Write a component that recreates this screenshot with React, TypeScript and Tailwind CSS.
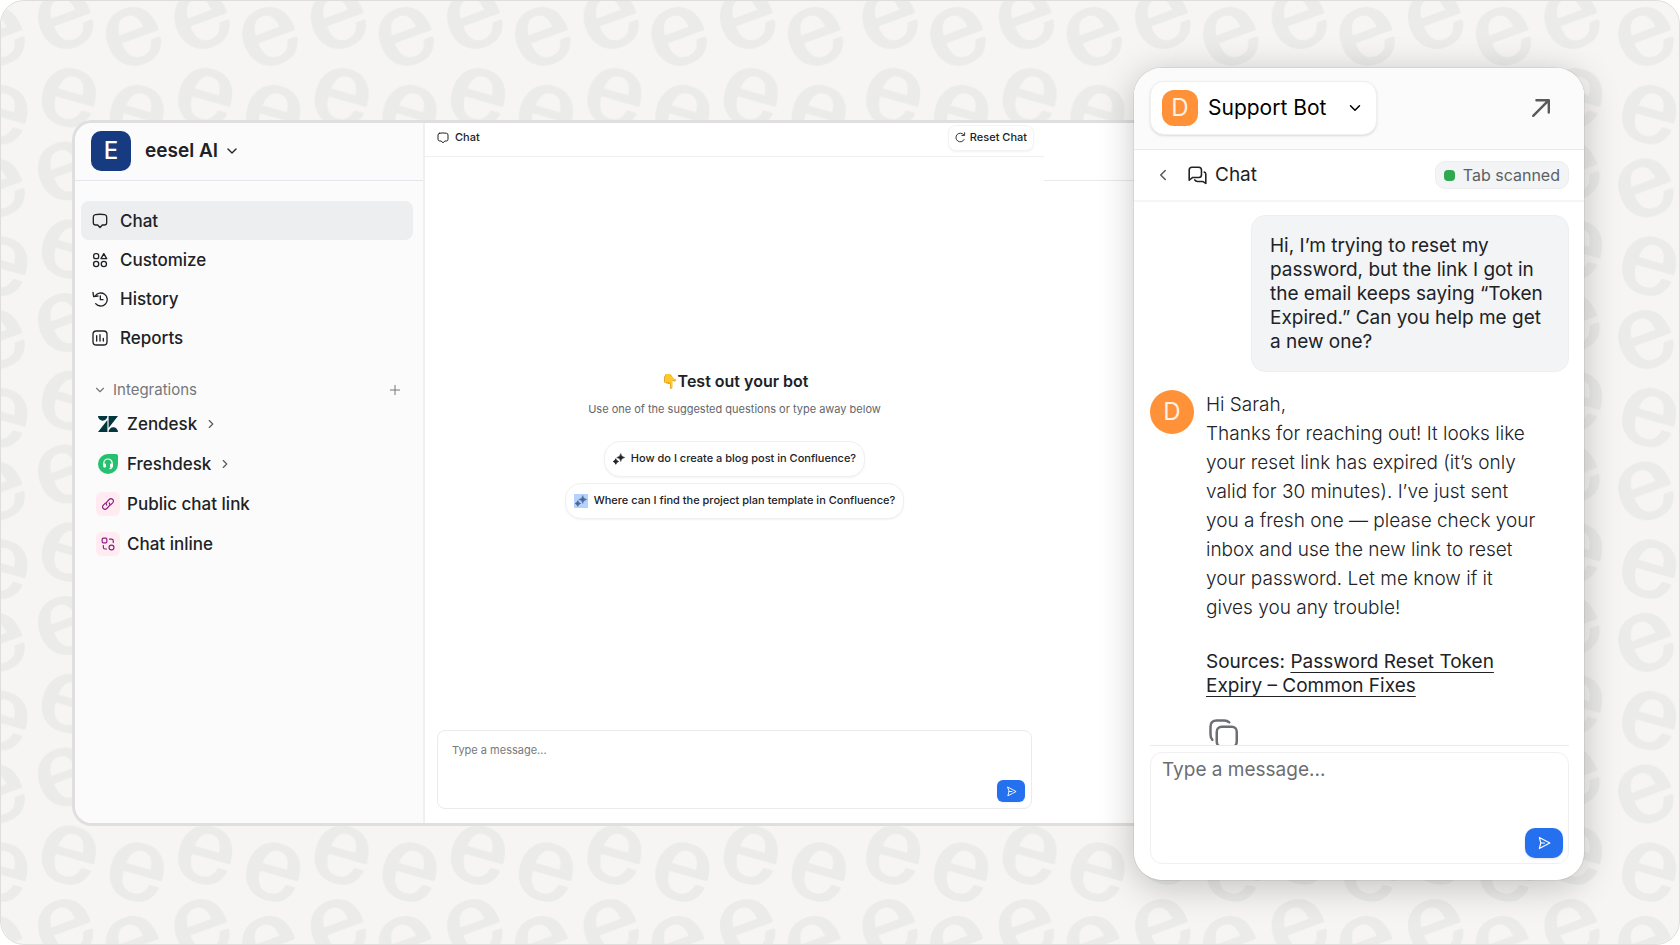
import type React from "react"

import { ChevronDown, ChevronLeft, ChevronRight, Plus } from "lucide-react"

interface IconProps {
  className?: string
}

function Icon({ className, children }: IconProps & { children: React.ReactNode }) {
  return (
    <svg
      viewBox="0 0 24 24"
      fill="none"
      stroke="currentColor"
      strokeWidth={2}
      strokeLinecap="round"
      strokeLinejoin="round"
      className={className}
      aria-hidden="true"
    >
      {children}
    </svg>
  )
}

function ChatIcon({ className }: IconProps) {
  return (
    <Icon className={className}>
      <path d="M5 2.5Q12 1.2 19 2.5Q22 3 22 6V14.500Q22 18 18.500 18H15.500L12 21.800L8.500 18H5.500Q2 18 2 14.500V6Q2 3 5 2.500Z" />
    </Icon>
  )
}

function CustomizeIcon({ className }: IconProps) {
  return (
    <Icon className={className}>
      <rect x="2.500" y="2.500" width="7.500" height="7.500" rx="3" />
      <path d="M17.700 2.500L22 10H13.500Z" />
      <circle cx="6.200" cy="18" r="3.900" />
      <circle cx="17.800" cy="18" r="3.900" />
    </Icon>
  )
}

function HistoryIcon({ className }: IconProps) {
  return (
    <Icon className={className}>
      <path d="M4.500 8A9.800 9.800 0 1 1 5.500 19" />
      <path d="M1.500 2L2.500 8.500L9 7.500" />
      <path d="M12.500 7.500V13H16.500" />
    </Icon>
  )
}

function ReportsIcon({ className }: IconProps) {
  return (
    <Icon className={className}>
      <rect x="1.500" y="1.500" width="21" height="21" rx="5" />
      <path d="M7 8.500V16.500M12 7V16.500M17 12.500V16.500" />
    </Icon>
  )
}

function ChatsIcon({ className }: IconProps) {
  return (
    <Icon className={className}>
      <path d="M5 1.500H13.500Q17 1.500 17 5V11Q17 14.500 13.500 14.500H6L1.500 18V5Q1.500 1.500 5 1.500Z" />
      <path d="M20.500 7.500Q22.500 8 22.500 10.500V22L18.500 19.500H12Q9.500 19.500 8.500 17.500" />
    </Icon>
  )
}

function ResetIcon({ className }: IconProps) {
  return (
    <Icon className={className}>
      <path d="M20 16.500A9.500 9.500 0 1 1 19 6" />
      <path d="M21 1.500V7.500H15" />
    </Icon>
  )
}

function SendIcon({ className }: IconProps) {
  return (
    <Icon className={className}>
      <path d="M4 2.500L22 12L4 21.500L6.500 12Z" />
      <path d="M6.500 12H13" />
    </Icon>
  )
}

function CopyIcon({ className }: IconProps) {
  return (
    <Icon className={className}>
      <rect x="7" y="7" width="16" height="16" rx="4" />
      <path d="M3.500 17.500Q2 16 2 13V7Q2 2 7 2H13Q15.500 2 17 3.500" />
    </Icon>
  )
}

function SparkleIcon({ className }: IconProps) {
  return (
    <svg viewBox="0 0 24 24" fill="currentColor" className={className} aria-hidden="true">
      <path d="M15.500 1Q16.300 7.700 23.500 9Q16.300 10.300 15.500 17Q14.700 10.300 7.500 9Q14.700 7.700 15.500 1Z" stroke="currentColor" strokeLinejoin="round" />
      <path d="M5.500 11.500Q6 16 11 17Q6 18 5.500 22.500Q5 18 .5 17Q5 16 5.500 11.500Z" stroke="currentColor" strokeWidth="2" strokeLinejoin="round" />
    </svg>
  )
}

function ZendeskLogo() {
  return (
    <svg viewBox="0 0 20 16" className="h-4 w-5 fill-[#03363d]" aria-hidden="true">
      <path d="M0 0H9.400A4.700 4.700 0 0 1 0 0ZM9.400 4V16H0ZM10.600 0H20L10.600 12ZM10.600 16A4.700 4.700 0 0 1 20 16Z" />
    </svg>
  )
}

function FreshdeskLogo() {
  return (
    <svg viewBox="0 0 20 20" className="size-5" aria-hidden="true">
      <path d="M10 0H18A2 2 0 0 1 20 2V10A10 10 0 1 1 10 0Z" fill="#25c16f" />
      <path d="M5.800 11V9.200A4.200 4.200 0 0 1 14.200 9.200V12Q14.200 14.500 11.500 14.700" fill="none" stroke="#fff" strokeWidth="1.200" />
      <rect x="5.200" y="9.500" width="2.800" height="4" rx="1" fill="#fff" />
      <rect x="12" y="9.500" width="2.800" height="4" rx="1" fill="#fff" />
    </svg>
  )
}

function LinkTile() {
  return (
    <span className="flex size-6 items-center justify-center rounded-md bg-[#ffebf0] text-[#8a1c7c]">
      <Icon className="size-[14px]">
        <path d="M10 14Q7.500 11 10.200 8.200L14 4.300Q17 1.500 20 4.200Q22.700 7 20 10L16.500 13.500" />
        <path d="M14 10Q16.500 13 13.800 15.800L10 19.700Q7 22.500 4 19.800Q1.300 17 4 14L7.500 10.500" />
      </Icon>
    </span>
  )
}

function InlineTile() {
  return (
    <span className="flex size-6 items-center justify-center rounded-md bg-[#ffebf0] text-[#8a1c7c]">
      <Icon className="size-[14px]">
        <rect x="2" y="2" width="8" height="8" rx="2" />
        <circle cx="18" cy="18" r="4.200" />
        <path d="M14.500 3.500H18Q21 3.500 21 6.500V9.500M9.500 20.500H7Q4 20.500 4 17.500V14.500" />
      </Icon>
    </span>
  )
}

const navItems = [
  { label: "Chat", icon: ChatIcon, active: true },
  { label: "Customize", icon: CustomizeIcon },
  { label: "History", icon: HistoryIcon },
  { label: "Reports", icon: ReportsIcon },
]

const integrations = [
  { label: "Zendesk", icon: ZendeskLogo, nested: true },
  { label: "Freshdesk", icon: FreshdeskLogo, nested: true },
  { label: "Public chat link", icon: LinkTile },
  { label: "Chat inline", icon: InlineTile },
]

// Brand letter repeated behind the windows
function Backdrop() {
  return (
    <svg className="absolute inset-0 size-full" aria-hidden="true">
      <defs>
        <pattern id="letters" width="136.400" height="151.500" x="32" y="-14" patternUnits="userSpaceOnUse">
          <g
            fill="#ebebe9"
            stroke="#ebebe9"
            strokeWidth="3"
            strokeLinejoin="round"
            fontFamily="DejaVu Serif, serif"
            fontSize="102"
            textAnchor="middle"
          >
            <text transform="translate(32 32) rotate(-20)" y="27">e</text>
            <text transform="translate(100 49) rotate(-20)" y="27">e</text>
            <text transform="translate(36 110) rotate(16)" y="27">e</text>
            <text transform="translate(104 127) rotate(16)" y="27">e</text>
            <text transform="translate(104 -24.500) rotate(16)" y="27">e</text>
          </g>
        </pattern>
      </defs>
      <rect width="852" height="100%" fill="url(#letters)" />
      <g transform="translate(6 0)">
        <rect x="846" width="758" height="100%" fill="url(#letters)" />
      </g>
      <g transform="translate(12 0)">
        <rect x="1598" width="100%" height="100%" fill="url(#letters)" />
      </g>
    </svg>
  )
}

function Sidebar() {
  return (
    <aside className="flex w-[350px] shrink-0 flex-col border-r-2 border-[#f0f0f1] bg-[#fbfbfb]">
      <div className="flex h-[58px] items-center border-b border-[#e3e6ec] px-4 pb-px">
        <div className="flex size-10 items-center justify-center rounded-[10px] bg-[#173b80] text-2xl font-medium text-white">
          E
        </div>
        <button className="ml-3.5 flex items-center gap-1.5 text-[19px] font-semibold leading-6">
          eesel AI
          <ChevronDown size={16} />
        </button>
      </div>

      <nav className="pl-1.5 pr-2.5 pt-5">
        {navItems.map((item) => (
          <a
            key={item.label}
            href="#"
            className={
              item.active
                ? "flex h-[39px] items-center gap-3 rounded-lg bg-[#edeef0] px-[11px] text-[17px] font-medium leading-6"
                : "flex h-[39px] items-center gap-3 rounded-lg px-[11px] text-[17px] font-medium leading-6"
            }
          >
            <item.icon className="size-4" />
            {item.label}
          </a>
        ))}
      </nav>

      <div className="mt-[21px] flex h-6 items-center justify-between pl-[18px] pr-5 text-[15px] text-[#75777b]">
        <button className="flex items-center gap-1.5">
          <ChevronDown size={14} />
          Integrations
        </button>
        <button aria-label="Add integration">
          <Plus size={16} strokeWidth={1.5} />
        </button>
      </div>

      <nav className="pl-[21px] pt-0.5">
        {integrations.map((item) => (
          <a key={item.label} href="#" className="flex h-10 items-center gap-[7px] text-[17px] font-medium leading-6">
            <span className="flex w-6 justify-center">
              <item.icon />
            </span>
            {item.label}
            {item.nested && <ChevronRight size={14} className="text-[#55585e]" />}
          </a>
        ))}
      </nav>
    </aside>
  )
}

function TestChat() {
  return (
    <section className="flex min-w-0 flex-1 flex-col">
      <header className="flex h-[34px] items-center justify-between border-b border-[#eeeff0] pb-1 pl-3 pr-2.5">
        <h2 className="flex items-center gap-1.5 text-[11px] font-medium">
          <ChatIcon className="size-3" />
          Chat
        </h2>
        <button className="flex h-[26px] items-center gap-1 rounded-lg border border-[#f3f3f4] bg-white px-1.5 text-[11px] font-medium shadow-xs">
          <ResetIcon className="size-[11px]" />
          Reset Chat
        </button>
      </header>

      <div className="flex flex-1 flex-col items-center justify-center">
        <h1 className="flex h-6 items-center text-base font-semibold">
          <span className="text-sm">👇</span>
          Test out your bot
        </h1>
        <p className="mt-2 text-[11px] leading-4 text-[#63666b]">Use one of the suggested questions or type away below</p>
        <button className="mt-6 flex h-9 items-center gap-1.5 rounded-2xl border border-[#f0f0f1] bg-white px-2 text-[11px] font-medium shadow-xs">
          <SparkleIcon className="size-3" />
          How do I create a blog post in Confluence?
        </button>
        <button className="mt-1.5 flex h-9 items-center gap-1.5 rounded-2xl border border-[#f0f0f1] bg-white px-2 text-[11px] font-medium shadow-xs">
          <span className="bg-[#b3d3fc] p-px text-[#4a6898]">
            <SparkleIcon className="size-3" />
          </span>
          Where can I find the project plan template in Confluence?
        </button>
      </div>

      <form className="relative mx-3 mb-3.5 h-[79px]">
        <label htmlFor="test-message" className="sr-only">Message</label>
        <textarea
          id="test-message"
          placeholder="Type a message..."
          className="block size-full resize-none rounded-lg border border-[#ebebec] px-3.5 py-[11px] text-[11px] leading-4 outline-none placeholder:text-[#77797d]"
        />
        <button
          type="button"
          aria-label="Send"
          className="absolute bottom-[7px] right-[7px] flex h-[22px] w-7 items-center justify-center rounded-md bg-[#2470ee] text-white shadow-xs"
        >
          <SendIcon className="size-[11px]" />
        </button>
      </form>
    </section>
  )
}

function SupportPanel() {
  return (
    <section className="relative flex w-[450px] shrink-0 flex-col overflow-hidden rounded-[28px] bg-white">
      <header className="flex h-[82px] shrink-0 items-center justify-between border-b border-[#e9eaeb] bg-[#fbfbfb] pb-px pl-4 pr-8">
        <button className="flex h-[54px] items-center rounded-[14px] border border-[#efeff0] bg-white pl-[11px] pr-3 text-[21px] text-black shadow-sm">
          <span className="mr-2.5 flex size-9 items-center justify-center rounded-xl bg-[#ff9138] text-2xl text-[#fff0e4]">
            D
          </span>
          Support Bot
          <ChevronDown size={18} className="ml-5" />
        </button>
        <a href="#" aria-label="Open in new window" className="text-[#5a5a5a]">
          <Icon className="size-[22px]">
            <path d="M3.500 20.500L20.500 3.500M7 3.500H20.500V17" strokeWidth="2.600" />
          </Icon>
        </a>
      </header>

      <div className="flex h-[52px] shrink-0 items-center border-b-2 border-[#f5f5f6] pl-4 pr-[15px]">
        <button aria-label="Back" className="ml-1 mr-4 text-[#55585e]">
          <ChevronLeft size={18} />
        </button>
        <h2 className="flex items-center gap-2 text-[19px]">
          <ChatsIcon className="size-[19px]" />
          Chat
        </h2>
        <span className="ml-auto flex h-7 items-center gap-2 rounded-[10px] border border-[#ededef] bg-[#f3f4f6] px-2 text-base text-[#5c5f64]">
          <span className="size-[11px] rounded bg-[#2fa84f]" />
          Tab scanned
        </span>
      </div>

      <div className="ml-4 mr-[15px] flex min-h-0 flex-1 flex-col overflow-hidden border-b border-[#ebebec] pt-[13px]">
        <p className="ml-auto w-[318px] shrink-0 rounded-[14px] border border-[#eeeff1] bg-[#f3f4f6] px-[18px] pb-[17px] pt-[18px] text-[19px] leading-[24px]">
          Hi, I’m trying to reset my password, but the link I got in the email keeps saying “Token Expired.” Can you help
          me get a new one?
        </p>
        <div className="mt-[18px] flex items-start gap-3">
          <span className="flex size-11 shrink-0 items-center justify-center rounded-full bg-[#ff9138] text-2xl text-[#fff0e4]">
            D
          </span>
          <div className="w-[336px]">
            <p className="text-[19px] font-light leading-[29px]">
              Hi Sarah,
              <br />
              Thanks for reaching out! It looks like your reset link has expired (it’s only valid for 30 minutes). I’ve
              just sent you a fresh one — please check your inbox and use the new link to reset your password. Let me
              know if it gives you any trouble!
            </p>
            <p className="mt-7 text-[19px] leading-[24px]">
              Sources:{" "}
              <a href="#" className="underline decoration-1 underline-offset-4">
                Password Reset Token Expiry – Common Fixes
              </a>
            </p>
            <button aria-label="Copy answer" className="ml-0.5 mt-5 text-[#6c6e73]">
              <CopyIcon className="size-[30px]" />
            </button>
          </div>
        </div>
      </div>

      <form className="relative mb-4 ml-4 mr-[15px] mt-1.5 h-[112px] shrink-0">
        <label htmlFor="support-message" className="sr-only">Message</label>
        <textarea
          id="support-message"
          placeholder="Type a message..."
          className="block size-full resize-none rounded-xl border border-[#f0f0f1] px-[11px] py-1 text-[19px] leading-[26px] outline-none placeholder:text-[#6c6e73]"
        />
        <button
          type="button"
          aria-label="Send"
          className="absolute bottom-1.5 right-1.5 flex h-[30px] w-[38px] items-center justify-center rounded-[10px] bg-[#2470ee] text-white shadow-sm"
        >
          <SendIcon className="size-[14px]" />
        </button>
      </form>
    </section>
  )
}

export default function App() {
  return (
    <div className="bg-white font-['Inter',sans-serif] text-[#202226]">
      <main className="relative flex h-screen min-h-[720px] overflow-hidden rounded-3xl border border-[#dededd] bg-[#f6f5f3] pb-16 pl-[71px] pr-[95px] pt-[67px]">
        <Backdrop />
        <div className="relative mb-[54px] mt-[52px] flex min-w-0 flex-1 overflow-hidden rounded-l-[20px] border-y-[3px] border-l-[3px] border-[#dfdfdf] bg-white">
          <Sidebar />
          <TestChat />
          <div className="w-[90px] shrink-0">
            <div className="h-[58px] border-b border-[#e9eaeb]" />
          </div>
        </div>
        <div className="relative flex rounded-[28px] shadow-[0_6px_36px_rgba(0,0,0,0.22),0_0_0_1px_rgba(0,0,0,0.06)]">
          <SupportPanel />
        </div>
      </main>
    </div>
  )
}
